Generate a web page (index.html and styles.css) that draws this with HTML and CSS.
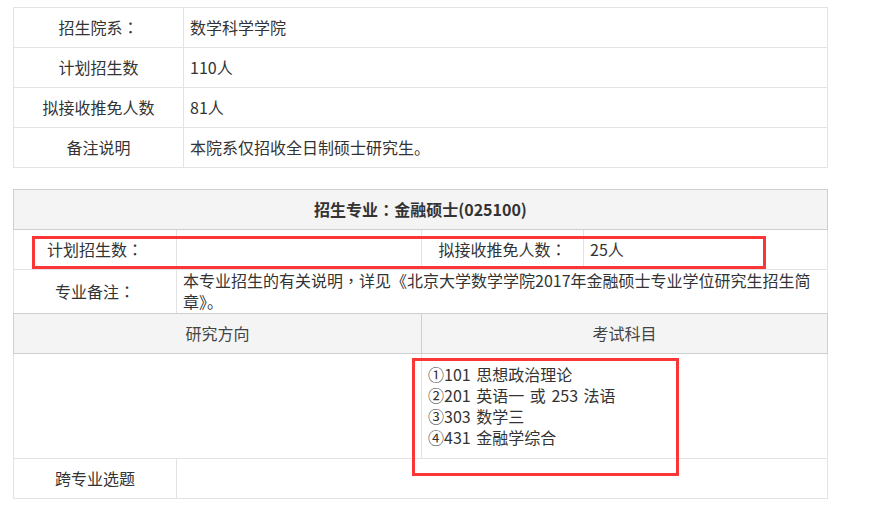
FILE: index.html
```html
<!DOCTYPE html>
<html lang="zh-CN">
<head>
  <meta charset="UTF-8">
  <title>招生专业：金融硕士(025100)</title>
  <link rel="stylesheet" href="styles.css">
</head>
<body>
<div class="page">
  <table class="info">
    <colgroup>
      <col class="info-label">
      <col>
    </colgroup>
    <tr>
      <td class="label">招生院系<span class="colon" lang="zh-TW">：</span></td>
      <td>数学科学学院</td>
    </tr>
    <tr>
      <td class="label">计划招生数</td>
      <td>110人</td>
    </tr>
    <tr>
      <td class="label">拟接收推免人数</td>
      <td>81人</td>
    </tr>
    <tr>
      <td class="label">备注说明</td>
      <td>本院系仅招收全日制硕士研究生。</td>
    </tr>
  </table>

  <table class="major">
    <colgroup>
      <col class="c1">
      <col class="c2">
      <col class="c3">
      <col>
    </colgroup>
    <tr class="head">
      <th colspan="4" class="title">招生专业<span class="colon" lang="zh-TW">：</span>金融硕士(025100)</th>
    </tr>
    <tr class="row">
      <td class="label">计划招生数<span class="colon" lang="zh-TW">：</span></td>
      <td></td>
      <td class="label">拟接收推免人数<span class="colon" lang="zh-TW">：</span></td>
      <td>25人</td>
    </tr>
    <tr class="note">
      <td class="label">专业备注<span class="colon" lang="zh-TW">：</span></td>
      <td colspan="3" class="text">本专业招生的有关说明<span class="colon" lang="zh-TW">，</span>详见《北京大学数学学院2017年金融硕士专业学位研究生招生简章》。</td>
    </tr>
    <tr class="head">
      <th colspan="2">研究方向</th>
      <th colspan="2">考试科目</th>
    </tr>
    <tr class="subjects">
      <td colspan="2"></td>
      <td colspan="2">
        <div>①101 思想政治理论</div>
        <div>②201 英语一 或 253 法语</div>
        <div>③303 数学三</div>
        <div>④431 金融学综合</div>
      </td>
    </tr>
    <tr class="row">
      <td class="label">跨专业选题</td>
      <td colspan="3"></td>
    </tr>
  </table>

  <div class="mark mark-plan"></div>
  <div class="mark mark-exam"></div>
</div>
</body>
</html>
```

FILE: styles.css
```css
html, body {
  margin: 0;
  padding: 0;
  background: #fff;
}

body {
  font: 16px/21px "Noto Sans CJK SC", "Microsoft YaHei", sans-serif;
  color: #333;
}

.page {
  position: relative;
  padding: 7px 0 20px 13px;
}

/* full-width colon/comma sit centred in their box, as in YaHei */
.colon {
  font-family: "Noto Sans CJK TC", sans-serif;
}

table {
  border-collapse: collapse;
  table-layout: fixed;
  width: 815px;
}

td, th {
  border: 1px solid #e3e3e3;
  padding: 0 6px;
  text-align: left;
  vertical-align: middle;
}

td.label {
  text-align: center;
}

/* top table */

.info-label {
  width: 170px;
}

.info td {
  height: 39px;
}

/* major table */

.major {
  margin-top: 21px;
}

.major .c1 {
  width: 163px;
}

.major .c2 {
  width: 245px;
}

.major .c3 {
  width: 162px;
}

.head th {
  height: 39px;
  background: #f4f4f4;
  border-color: #cfcfcf;
  font-weight: normal;
  text-align: center;
  color: #444;
}

.head th.title {
  font-weight: bold;
  color: #333;
}

.row td {
  height: 39px;
}

.note td {
  height: 42px;
  padding-top: 0;
  padding-bottom: 1px;
  border-bottom-color: #cfcfcf;
}

.note td.text {
  vertical-align: top;
}

.subjects td {
  height: 104px;
  word-spacing: 2px;
}

/* red annotation boxes */

.mark {
  position: absolute;
  border: 3px solid #fb3636;
  box-sizing: border-box;
}

.mark-plan {
  left: 32px;
  top: 236px;
  width: 734px;
  height: 33px;
}

.mark-exam {
  left: 412px;
  top: 358px;
  width: 267px;
  height: 118px;
}
```
